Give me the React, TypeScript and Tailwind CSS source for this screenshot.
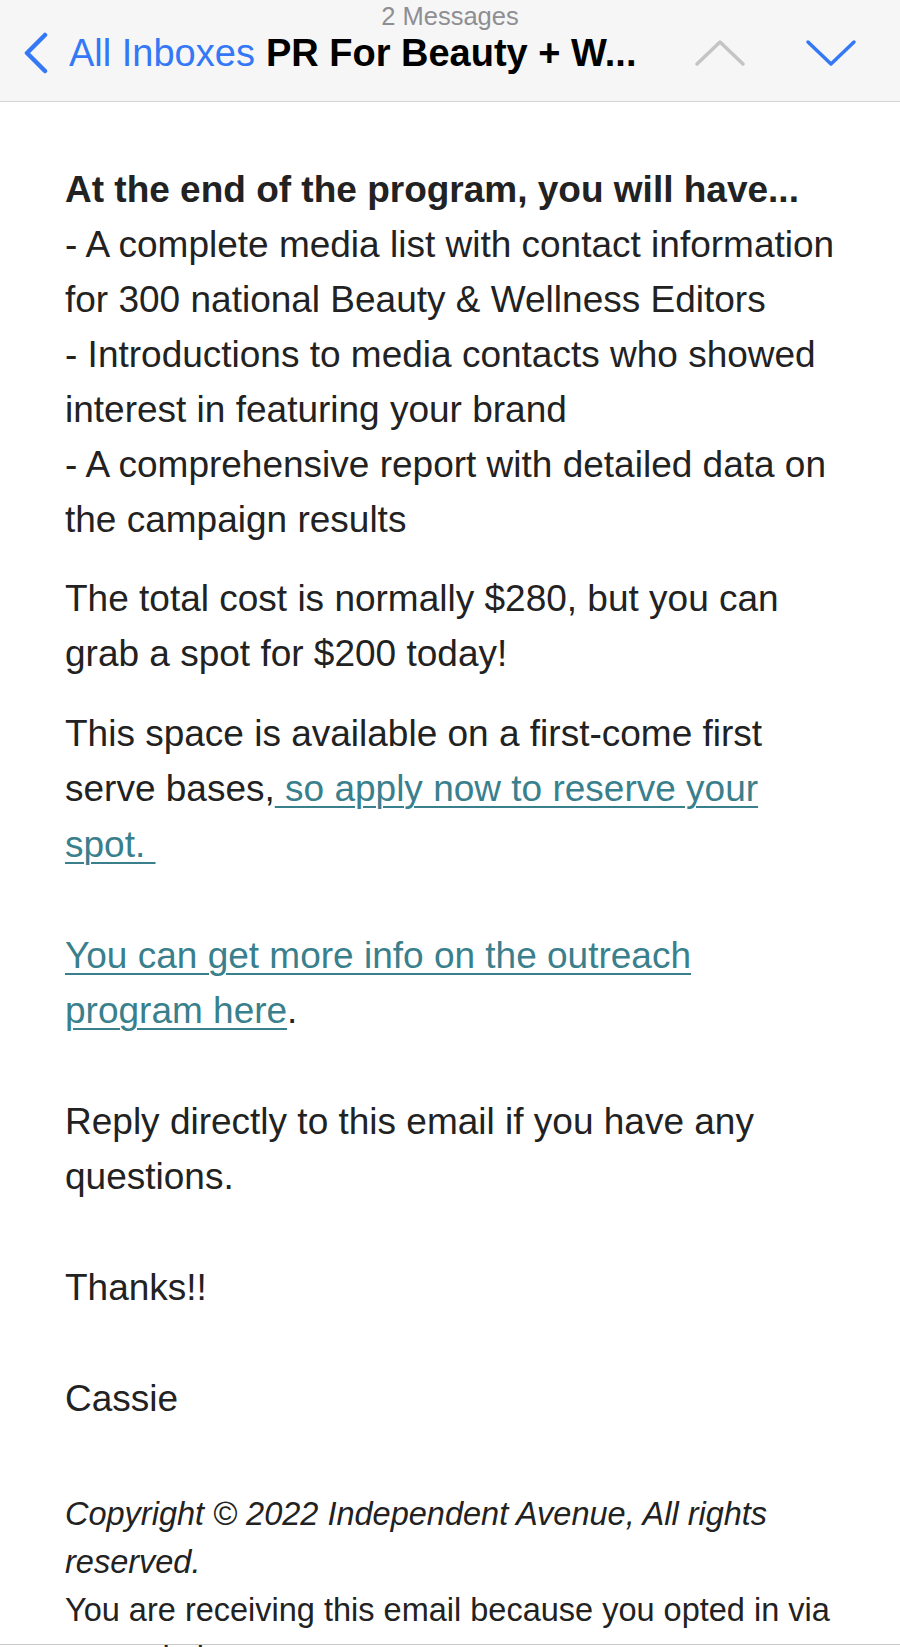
import React from "react";

const font = { fontFamily: '"Liberation Sans", Arial, Helvetica, sans-serif' };

function Header() {
    return (
        <div className="relative h-[102px] shrink-0 bg-[#f6f6f6] border-b border-[#d6d6d6]">
            <div className="pt-[1px] text-center text-[25.5px] leading-[30px] text-[#8e8e93]">2 Messages</div>
            <div className="flex items-center h-[44px] pl-[22px] pr-[43px]">
                <svg width="28" height="42" viewBox="0 0 28 42" className="shrink-0">
                    <path d="M23 3 L5 21 L23 39" fill="none" stroke="#3478f6" strokeWidth="4.5" strokeLinecap="round" strokeLinejoin="round" />
                </svg>
                <span className="ml-[19px] text-[38px] text-[#3478f6]">All Inboxes</span>
                <span className="ml-[11px] text-[38px] font-semibold text-black">PR For Beauty + W...</span>
                <div className="ml-auto flex items-center gap-[59px]">
                    <svg width="52" height="28" viewBox="0 0 52 28">
                        <path d="M3 25 L26 3 L49 25" fill="none" stroke="#c4c4c6" strokeWidth="3.5" strokeLinecap="round" strokeLinejoin="round" />
                    </svg>
                    <svg width="52" height="28" viewBox="0 0 52 28">
                        <path d="M3 3 L26 25 L49 3" fill="none" stroke="#3478f6" strokeWidth="3.5" strokeLinecap="round" strokeLinejoin="round" />
                    </svg>
                </div>
            </div>
        </div>
    );
}

export default function App() {
    const link = "text-[#3a7f8c] underline decoration-[2px] underline-offset-[5px]";
    return (
        <div className="relative w-[900px] h-[1647px] overflow-hidden bg-white flex flex-col" style={font}>
            <Header />
            <div className="pl-[65px] pr-[16px] pt-[60px] text-[37px] leading-[55px] text-[#222222]">
                <p>
                    <b className="font-bold">At the end of the program, you will have...</b>
                    <br />- A complete media list with contact information
                    <br />for 300 national Beauty &amp; Wellness Editors
                    <br />- Introductions to media contacts who showed
                    <br />interest in featuring your brand
                    <br />- A comprehensive report with detailed data on
                    <br />the campaign results
                </p>
                <p className="mt-[24px]">
                    The total cost is normally $280, but you can
                    <br />grab a spot for $200 today!
                </p>
                <p className="mt-[25px] leading-[55.4px]">
                    This space is available on a first-come first
                    <br />serve bases,
                    <a className={link}>&nbsp;so apply now to reserve your</a>
                    <br />
                    <a className={link}>spot.&nbsp;</a>
                    <br />
                    <br />
                    <a className={link}>You can get more info on the outreach</a>
                    <br />
                    <a className={link}>program here</a>.
                    <br />
                    <br />
                    Reply directly to this email if you have any
                    <br />questions.
                    <br />
                    <br />
                    Thanks!!
                    <br />
                    <br />
                    Cassie
                </p>
                <div className="mt-[64px] text-[32.5px] leading-[48px]">
                    <p className="italic">
                        Copyright © 2022 Independent Avenue, All rights
                        <br />reserved.
                    </p>
                    <p>
                        You are receiving this email because you opted in via
                        <br />our website.
                    </p>
                </div>
            </div>
            <div className="absolute left-0 right-0 bottom-[2px] h-[1px] bg-[#c8c8c8]" />
        </div>
    );
}
